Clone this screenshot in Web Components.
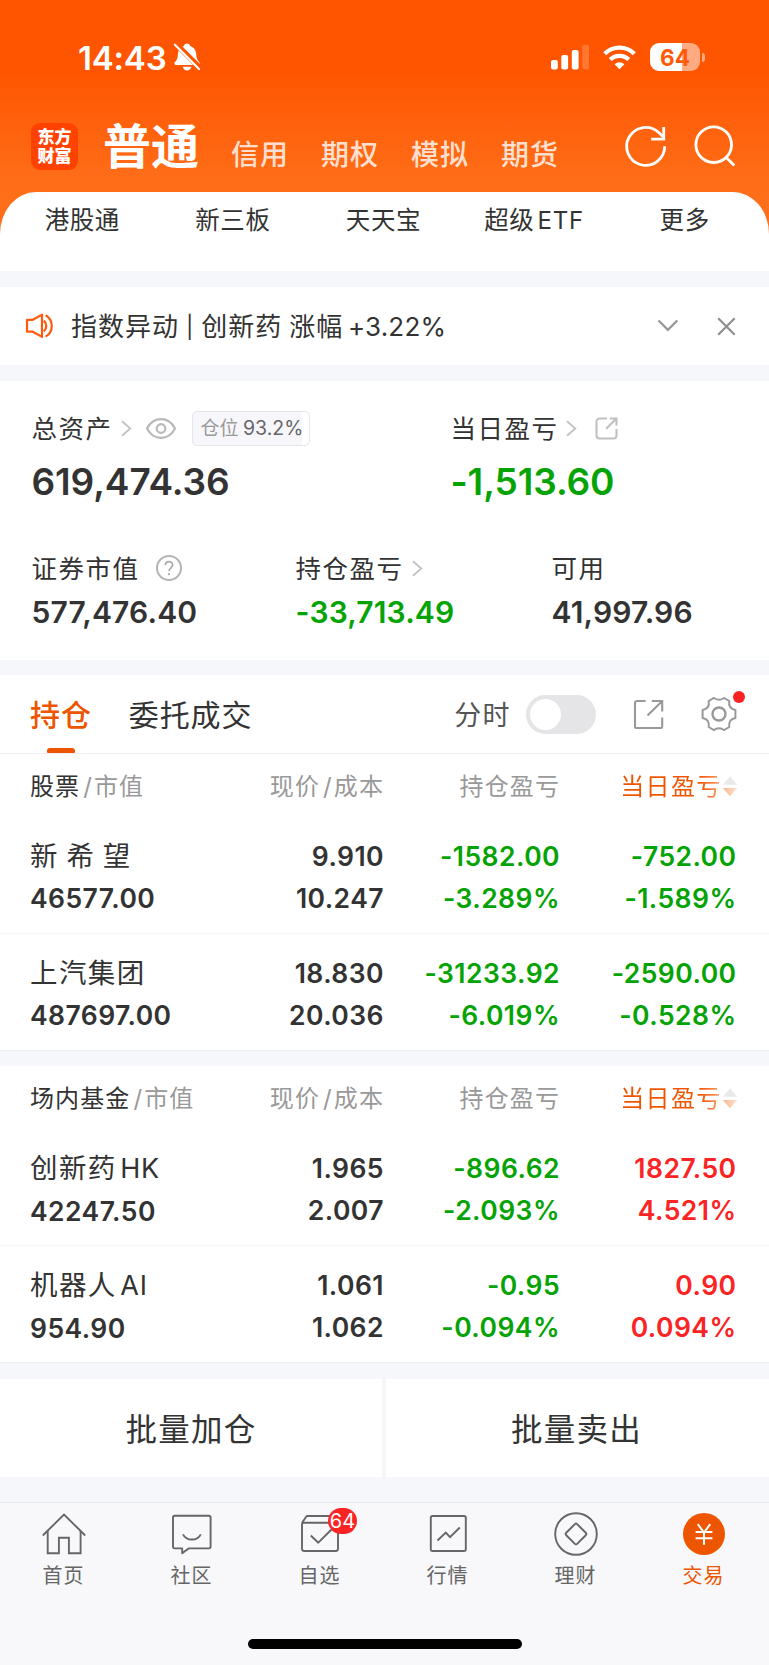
<!DOCTYPE html>
<html lang="zh-CN">
<head>
<meta charset="utf-8">
<meta name="viewport" content="width=device-width, initial-scale=1">
<title>交易</title>
<style>
  html, body { margin: 0; padding: 0; }
  body {
    width: 769px;
    height: 1665px;
    overflow: hidden;
    background: #f6f7fa;
    color: #333;
    font-family: Inter, "Noto Sans CJK SC", sans-serif;
    --brand: #ee5500;
    --up: #fb2424;
    --down: #05a305;
    --muted: #999;
  }
</style>
</head>
<body>
<trade-app></trade-app>

<script>
// ── Helpers ───────────────────────────────────────────────
const esc = s => s.replace(/&/g, '&amp;').replace(/</g, '&lt;').replace(/>/g, '&gt;');

// Latin run right after a CJK character gets a small gap
const mixed = s => esc(s).replace(/([\u4e00-\u9fff])([A-Z]+)/g, '$1<span class="lat">$2</span>');

class BaseElement extends HTMLElement {
  constructor() {
    super();
    this.attachShadow({ mode: 'open' });
  }
  connectedCallback() {
    this.shadowRoot.innerHTML = `<style>${this.styles()}</style>${this.render()}`;
  }
  styles() { return ':host { display: block; }'; }
  render() { return '<slot></slot>'; }
}

// ── <ui-icon name> ────────────────────────────────────────
// [width, height, markup]
const ICONS = {
  bell: [26, 28, `<g fill="currentColor"><path d="M13 .5c1.7 0 2.9 1 3.2 2.4c3.7 1.2 5.8 4.1 6 8.1c.2 4.3 1.3 6.2 2.9 8c.8.9.7 2.2-.1 2.900H1.600c-1.2 0-1.6-1.7-.8-2.6c2-2.1 3-4 3.1-8.5c.2-4 2.3-6.7 5.9-7.9C10.2 1.500 11.300.5 13 .5Z"/><path d="M8.800 23.800h8.600c-.5 2.300-2.100 3.800-4.300 3.800s-3.800-1.500-4.300-3.800Z"/></g><path d="M1.500.5 26 25" stroke="#ff5500" stroke-width="5.4"/><path d="M.9 1.700 25 26" stroke="currentColor" stroke-width="2.2" stroke-linecap="round"/>`],
  signal: [38, 25, `<g fill="currentColor"><rect x="0" y="15" width="6.8" height="9.5" rx="2"/><rect x="10.3" y="10" width="6.8" height="14.5" rx="2"/><rect x="20.8" y="5" width="6.8" height="19.5" rx="2"/><rect x="31.2" y="0" width="6.8" height="24.5" rx="2" opacity=".2"/></g>`],
  wifi: [33, 25, `<g fill="none" stroke="currentColor" stroke-width="4.2"><path d="M1.700 8.700a21 21 0 0 1 29.600 0"/><path d="M7.200 14.600a13.400 13.400 0 0 1 18.600 0"/></g><path d="M16.500 24.300 11.600 19.200a7 7 0 0 1 9.800 0Z" fill="currentColor"/>`],
  refresh: [42, 42, `<g fill="none" stroke="currentColor" stroke-width="2.8"><path d="M39.700 21.300A19 19 0 1 1 34 7.800l4 4"/><path d="M38.700 2v12.200H26.200"/></g>`],
  search: [42, 42, `<g fill="none" stroke="currentColor" stroke-width="2.8"><circle cx="19.700" cy="19.700" r="17.800"/><path d="m32 32.200 8.300 8.300"/></g>`],
  speaker: [28, 26, `<g fill="none" stroke="#ff5a0c" stroke-width="2.2" stroke-linejoin="round"><path d="M1 6.800h5.800L16 1.600v22.300l-9.200-5.200H1Z"/><path d="M17.800 7.600c3.300 2.700 3.300 7.800 0 10.700"/><path d="M19.600 2.300c8.200 4.600 8.200 16.500 0 21.300"/></g>`],
  down: [22, 14, `<path d="m1.500 1.500 9.400 9.300 9.400-9.300" fill="none" stroke="#999" stroke-width="2.4"/>`],
  close: [19, 19, `<path d="m1.200 1.200 16.500 16.500m0-16.500L1.200 17.700" stroke="#8f8f8f" stroke-width="2.200"/>`],
  right: [11, 17, `<path d="m1 1.200 8.300 7.300L1 15.800" fill="none" stroke="#c2c2c2" stroke-width="1.8"/>`],
  eye: [30, 21, `<g fill="none" stroke="#b9b9b9" stroke-width="2.2"><path d="M1 10.500C7.500-2 22.500-2 29 10.500C22.500 23 7.500 23 1 10.500Z"/><circle cx="15" cy="10.500" r="4.300"/></g>`],
  shareSm: [23, 23, `<g fill="none" stroke="#c0c0c0" stroke-width="2.1"><path d="M12 1.500H4.500a3 3 0 0 0-3 3v14a3 3 0 0 0 3 3h14a3 3 0 0 0 3-3v-6.500"/><path d="M14.800 1.500h6.700v7M21.200 1.800l-10 10"/></g>`],
  help: [26, 26, `<circle cx="13" cy="13" r="12" fill="none" stroke="#b4b4b4" stroke-width="2"/><path d="M9.300 10.300c0-4.900 7.300-4.800 7.300-.3c0 2.800-3.600 3-3.600 6.200" fill="none" stroke="#aaa" stroke-width="1.7"/><circle cx="13" cy="19.200" r="1.100" fill="#aaa"/>`],
  share: [31, 31, `<g fill="none" stroke="#999" stroke-width="2.1"><path d="M12.600 2H4a2 2 0 0 0-2 2v24a1 1 0 0 0 1 1h25a1.200 1.200 0 0 0 1.200-1.200V18.500"/><path d="M18.800 2h10.400v10.500M28.800 2.400 14.500 16.500"/></g>`],
  gear: [36, 36, `<g fill="none" stroke="#999" stroke-width="2"><path stroke-linejoin="round" d="M13 1.900C15.500 4.300 20.500 4.300 23 1.900L28.300 5C27.500 9.500 29.500 13 34.400 14V22C29.500 23 27.500 26.500 28.300 31L23 34.100C20.500 31.700 15.500 31.700 13 34.100L7.700 31C8.500 26.500 6.500 23 1.600 22V14C6.500 13 8.500 9.500 7.700 5Z"/><circle cx="18" cy="18" r="6.500" stroke-width="2.400"/></g>`],
  sort: [16, 21, `<path d="M8 .5 15.300 8.700H.7Z" fill="#e9e9e9"/><path d="M8 20.300 15.300 12H.7Z" fill="url(#g)"/><defs><linearGradient id="g"><stop stop-color="#f9b58c"/><stop offset="1" stop-color="#fde4d6"/></linearGradient></defs>`],
  home: [44, 44, `<g fill="none" stroke="#666" stroke-width="1.9"><path d="M.8 23.500 22 2.500l21.200 21"/><path d="M5.700 19v22.200h11.200V25.700h10v15.500h11.700V19"/></g>`],
  chat: [44, 44, `<g fill="none" stroke="#666" stroke-width="1.9" stroke-linejoin="round"><path d="M4.800 3.800h34a1.800 1.800 0 0 1 1.800 1.800v29a1.800 1.800 0 0 1-1.800 1.800H18.600L12.200 41.300V36.400H4.800A1.800 1.800 0 0 1 3 34.600v-29a1.800 1.800 0 0 1 1.800-1.800Z"/><path d="M13 22.300c3.500 7 14.300 7 17.800 0"/></g>`],
  pick: [44, 44, `<g fill="none" stroke="#666" stroke-width="1.9" stroke-linejoin="round"><path d="M4 10.800 8.700 4H38l2 6.800"/><path d="M5.800 10.800h32.400a1.800 1.800 0 0 1 1.800 1.800v24.200a2.200 2.200 0 0 1-2.200 2.200H6.200A2.200 2.200 0 0 1 4 36.800V12.600a1.800 1.800 0 0 1 1.800-1.800Z"/><path d="m12.800 23.500 7.500 7.200 13.200-13.200"/></g>`],
  chart: [44, 44, `<g fill="none" stroke="#666" stroke-width="1.9"><rect x="4.800" y="4" width="35" height="35" rx="1.8"/><path d="m11.500 28.500 8.300-8 4.200 4.700 9.800-9.700"/></g>`],
  coin: [44, 44, `<g fill="none" stroke="#666" stroke-width="1.9" stroke-linejoin="round"><circle cx="22" cy="22" r="20.800"/><path d="M20.900 12.100a1.600 1.600 0 0 1 2.200 0L32 21a1.600 1.600 0 0 1 0 2l-8.900 8.900a1.600 1.600 0 0 1-2.200 0L12 23a1.600 1.600 0 0 1 0-2Z"/></g>`],
  trade: [44, 44, `<circle cx="22" cy="22" r="21" fill="#ee5500"/><g fill="none" stroke="#fff" stroke-width="2"><path d="m15.800 12.200 6.200 8.300 6.200-8.300M22 19.500v13.300M13.600 20h16.800M13.600 26.200h16.800"/></g>`],
};

customElements.define('ui-icon', class extends BaseElement {
  styles() { return ':host { display: block; flex: none; } svg { display: block; overflow: visible; }'; }
  render() {
    const [w, h, body] = ICONS[this.getAttribute('name')];
    return `<svg width="${w}" height="${h}" viewBox="0 0 ${w} ${h}">${body}</svg>`;
  }
});

// ── <status-bar> ──────────────────────────────────────────
customElements.define('status-bar', class extends BaseElement {
  styles() {
    return `
      :host { display: flex; align-items: center; height: 30px; padding: 42px 64px 0 78px; color: #fff; }
      .time { font-size: 33px; line-height: 30px; padding-top: 1px; font-weight: 600; letter-spacing: -0.2px; margin-right: 8px; }
      .signal { margin-left: auto; margin-right: 14px; }
      .wifi { margin-right: 14px; }
      .battery {
        width: 50px; height: 28px; border-radius: 9px; box-sizing: border-box;
        background: linear-gradient(90deg, #fff 64%, #ffaa80 64%);
        color: #ff5a08; font-size: 22.5px; line-height: 29px; font-weight: 700; text-align: center;
      }
      .tip { width: 3px; height: 9px; margin-left: 2px; border-radius: 0 4px 4px 0; background: #ffaa80; }
    `;
  }
  render() {
    return `
      <span class="time">14:43</span><ui-icon name="bell"></ui-icon>
      <ui-icon class="signal" name="signal"></ui-icon>
      <ui-icon class="wifi" name="wifi"></ui-icon>
      <div class="battery">64</div><div class="tip"></div>`;
  }
});

// ── <account-nav> ─────────────────────────────────────────
customElements.define('account-nav', class extends BaseElement {
  styles() {
    return `
      :host { display: flex; align-items: center; height: 70px; padding: 39px 33.5px 0 31px; color: #fff; }
      .logo {
        width: 47px; height: 47px; border-radius: 9px; background: #ff4200; box-sizing: border-box;
        padding-top: 5px; font-size: 17px; line-height: 19px; font-weight: 900; text-align: center;
      }
      .current { margin-left: 25px; padding-top: 1px; font-size: 48px; line-height: 70px; font-weight: 700; }
      .tab { margin-left: 32px; padding-top: 17px; font-size: 28px; line-height: 40px; letter-spacing: 1px; font-weight: 500; color: #ffe0d0; }
      .refresh { margin-left: auto; }
      .search { margin-left: 27px; }
    `;
  }
  render() {
    const tabs = ['信用', '期权', '模拟', '期货'].map(t => `<span class="tab">${t}</span>`).join('');
    return `<div class="logo">东方<br>财富</div><span class="current">普通</span>${tabs}
      <ui-icon class="refresh" name="refresh"></ui-icon><ui-icon class="search" name="search"></ui-icon>`;
  }
});

// ── <quick-nav> ───────────────────────────────────────────
customElements.define('quick-nav', class extends BaseElement {
  styles() {
    return `
      :host {
        display: grid; grid-template-columns: repeat(5, 1fr); box-sizing: border-box;
        height: 79.5px; margin-top: 10.5px; padding: 8px 9px 0 7px; background: #fff; border-radius: 36px 36px 0 0 / 42px 42px 0 0;
      }
      span.item { text-align: center; font-size: 24.5px; line-height: 40px; letter-spacing: .6px; }
      .lat { margin-left: 3px; font-size: 24px; letter-spacing: .8px; }
    `;
  }
  render() {
    return ['港股通', '新三板', '天天宝', '超级ETF', '更多'].map(t => `<span class="item">${mixed(t)}</span>`).join('');
  }
});

// ── <news-bar> ────────────────────────────────────────────
customElements.define('news-bar', class extends BaseElement {
  styles() {
    return `
      :host { display: flex; align-items: center; height: 78px; margin-top: 16px; padding: 0 33px 0 26px; background: #fff; }
      .text { margin-left: 17px; padding-top: 1px; font-size: 26px; line-height: 40px; letter-spacing: 1px; word-spacing: -1.3px; white-space: pre; }
      ::slotted(b) { font-weight: 400; letter-spacing: .2px; margin-left: -2.5px; }
      ::slotted(i) { font-style: normal; font-size: 22px; vertical-align: 1px; }
      .down { margin-left: auto; }
      .close { margin-left: 38px; }
    `;
  }
  render() {
    return `<ui-icon name="speaker"></ui-icon><span class="text"><slot></slot></span>
      <ui-icon class="down" name="down"></ui-icon><ui-icon class="close" name="close"></ui-icon>`;
  }
});

// ── <asset-stat label value size tone> ────────────────────
customElements.define('asset-stat', class extends BaseElement {
  styles() {
    return `
      :host { display: block; }
      .label { display: flex; align-items: center; height: 36px; font-size: 25.5px; line-height: 37px; letter-spacing: 1.5px; }
      .value { font-size: 30px; line-height: 40px; font-weight: 600; margin-top: 6px; letter-spacing: .15px; }
      :host([size="large"]) .value { font-size: 37px; line-height: 48px; margin-top: 12px; letter-spacing: -.1px; }
      :host([tone="down"]) .value { color: var(--down); }
    `;
  }
  render() {
    return `<div class="label">${this.getAttribute('label')}<slot></slot></div>
      <div class="value">${this.getAttribute('value')}</div>`;
  }
});

// ── <asset-card> ──────────────────────────────────────────
customElements.define('asset-card', class extends BaseElement {
  styles() {
    return `
      :host { display: block; box-sizing: border-box; height: 279px; margin-top: 16px; padding: 29px 0 0 31.5px; background: #fff; }
      .top { display: grid; grid-template-columns: 419px 1fr; height: 140px; }
      .bottom { display: grid; grid-template-columns: 264px 256px 1fr; }
      .tag {
        display: flex; align-items: center; box-sizing: border-box; height: 35px; width: 118px; padding-left: 8px;
        border: 1px solid #e6e6ea; border-radius: 5px; font-size: 19px; letter-spacing: 0; color: #999;
        background: linear-gradient(90deg, #f7f7fb 109px, #fff 109px);
      }
      .tag b { margin-left: 4.5px; font-weight: 400; font-size: 19.5px; letter-spacing: 0; color: #666; }
    `;
  }
  render() {
    return `
      <div class="top">
        <asset-stat label="总资产" value="619,474.36" size="large">
          <ui-icon name="right" style="margin-left:8px"></ui-icon>
          <ui-icon name="eye" style="margin-left:14px"></ui-icon>
          <div class="tag" style="margin-left:16px">仓位<b>93.2%</b></div>
        </asset-stat>
        <asset-stat label="当日盈亏" value="-1,513.60" size="large" tone="down">
          <ui-icon name="right" style="margin-left:7px"></ui-icon>
          <ui-icon name="shareSm" style="margin-left:18px"></ui-icon>
        </asset-stat>
      </div>
      <div class="bottom">
        <asset-stat label="证券市值" value="577,476.40"><ui-icon name="help" style="margin-left:16px"></ui-icon></asset-stat>
        <asset-stat label="持仓盈亏" value="-33,713.49" tone="down"><ui-icon name="right" style="margin-left:8px"></ui-icon></asset-stat>
        <asset-stat label="可用" value="41,997.96"></asset-stat>
      </div>`;
  }
});

// ── <position-tabs> ───────────────────────────────────────
customElements.define('position-tabs', class extends BaseElement {
  styles() {
    return `
      :host {
        display: flex; align-items: center; box-sizing: border-box; height: 79px; margin-top: 15px;
        padding: 0 32px 0 30px; background: #fff; border-bottom: 1px solid #efeff1;
      }
      .tab { position: relative; height: 78px; font-size: 30px; line-height: 80px; letter-spacing: .9px; }
      .tab + .tab { margin-left: 37px; }
      .active { color: var(--brand); font-weight: 500; }
      .active::after {
        content: ""; position: absolute; left: 17px; bottom: 0; width: 28px; height: 5px;
        border-radius: 3px 3px 1px 1px; background: var(--brand);
      }
      .label { margin-left: auto; padding-top: 3px; font-size: 27px; line-height: 40px; letter-spacing: 1.4px; color: #555; }
      .switch { width: 70px; height: 39px; margin-left: 15px; border-radius: 20px; background: #e5e5e7; box-sizing: border-box; padding: 4px; }
      .knob { width: 31px; height: 31px; border-radius: 50%; background: #fff; }
      .share { margin-left: 37px; }
      .gear { position: relative; margin-left: 37px; }
      .dot { position: absolute; right: -8px; top: -5px; width: 12px; height: 12px; border-radius: 50%; background: #fb2424; }
    `;
  }
  render() {
    return `
      <span class="tab active">持仓</span><span class="tab">委托成交</span>
      <span class="label">分时</span><div class="switch"><div class="knob"></div></div>
      <ui-icon class="share" name="share"></ui-icon>
      <div class="gear"><ui-icon name="gear"></ui-icon><span class="dot"></span></div>`;
  }
});

// ── <holdings-table kind rows> ────────────────────────────
customElements.define('holdings-table', class extends BaseElement {
  styles() {
    return `
      :host { display: block; background: #fff; }
      .row, .head { display: grid; grid-template-columns: 183px 171px 176px 176.5px; padding-left: 30px; box-sizing: border-box; text-align: right; }
      .head { height: 63px; font-size: 24px; line-height: 65px; letter-spacing: 1.1px; color: var(--muted); }
      .head i { font-style: normal; margin: 0 1px 0 3px; }
      .row > :first-child, .head > :first-child { text-align: left; white-space: nowrap; }
      .kind { color: #333; }
      .sorted { display: flex; align-items: center; justify-content: flex-end; height: 64px; color: var(--brand); margin-right: -1px; }
      .sorted span { letter-spacing: 1.3px; background: linear-gradient(90deg, #ee5500 78%, #f8a677); -webkit-background-clip: text; color: transparent; }
      .row { height: 117px; padding-top: 18px; border-bottom: 1px solid #f6f6f8; font-size: 26.5px; line-height: 42px; font-weight: 600; letter-spacing: .45px; }
      .row.last { border-bottom-color: #eeeff2; }
      .name { display: block; font-size: 27.5px; font-weight: 400; letter-spacing: 1.4px; word-spacing: -1.6px; white-space: pre; }
      .name .lat { margin-left: 3.5px; font-size: 27px; letter-spacing: .8px; }
      .up { color: var(--up); }
      .down { color: var(--down); }
    `;
  }
  render() {
    const rows = JSON.parse(this.getAttribute('rows'));
    const tone = v => v.startsWith('-') ? 'down' : 'up';
    return `
      <div class="head">
        <div><span class="kind">${this.getAttribute('kind')}</span><i>/</i>市值</div>
        <div>现价<i>/</i>成本</div><div>持仓盈亏</div>
        <div class="sorted"><span>当日盈亏</span><ui-icon name="sort"></ui-icon></div>
      </div>
      ${rows.map(([name, worth, price, cost, pl, plPct, day, dayPct], i) => `
      <div class="row${i === rows.length - 1 ? ' last' : ''}">
        <div><span class="name">${mixed(name)}</span>${worth}</div>
        <div>${price}<br>${cost}</div>
        <div class="${tone(pl)}">${pl}<br>${plPct}</div>
        <div class="${tone(day)}">${day}<br>${dayPct}</div>
      </div>`).join('')}`;
  }
});

// ── <batch-actions> ───────────────────────────────────────
customElements.define('batch-actions', class extends BaseElement {
  styles() {
    return `
      :host { display: grid; grid-template-columns: 382px 383px; gap: 4px; height: 98px; margin-top: 16px; }
      div { height: 98px; background: #fff; text-align: center; font-size: 31.5px; line-height: 101px; letter-spacing: 1.2px; }
      div + div { padding-right: 2px; box-sizing: border-box; }
    `;
  }
  render() { return '<div>批量加仓</div><div>批量卖出</div>'; }
});

// ── <tab-bar> ─────────────────────────────────────────────
customElements.define('tab-bar', class extends BaseElement {
  styles() {
    return `
      :host { display: block; height: 162px; margin-top: 25px; background: #f8f8fb; border-top: 1.5px solid #e8e8ea; }
      nav { display: grid; grid-template-columns: repeat(6, 1fr); width: 768px; height: 136px; }
      .item { display: flex; flex-direction: column; align-items: center; padding-top: 9px; position: relative; }
      .label { margin: 4px 0 0 -1px; font-size: 20px; line-height: 32px; letter-spacing: 1px; color: #666; }
      .item.active .label { color: var(--brand); }
      .badge {
        position: absolute; left: 72px; top: 4.5px; width: 29px; height: 26px; border-radius: 13px;
        background: #fb2424; color: #fff; font-size: 20px; line-height: 26px; text-align: center;
      }
      .indicator { width: 274px; height: 10px; margin: 0 auto; border-radius: 5px; background: #000; }
    `;
  }
  render() {
    const items = [['home', '首页'], ['chat', '社区'], ['pick', '自选', 64], ['chart', '行情'], ['coin', '理财'], ['trade', '交易']];
    return `<nav>${items.map(([icon, label, badge]) => `
      <div class="item${icon === 'trade' ? ' active' : ''}">
        <ui-icon name="${icon}"></ui-icon><span class="label">${label}</span>
        ${badge ? `<span class="badge">${badge}</span>` : ''}
      </div>`).join('')}</nav><div class="indicator"></div>`;
  }
});

// ── <trade-app> ───────────────────────────────────────────
const STOCKS = [
  ['新 希 望', '46577.00', '9.910', '10.247', '-1582.00', '-3.289%', '-752.00', '-1.589%'],
  ['上汽集团', '487697.00', '18.830', '20.036', '-31233.92', '-6.019%', '-2590.00', '-0.528%'],
];
const FUNDS = [
  ['创新药HK', '42247.50', '1.965', '2.007', '-896.62', '-2.093%', '1827.50', '4.521%'],
  ['机器人AI', '954.90', '1.061', '1.062', '-0.95', '-0.094%', '0.90', '0.094%'],
];

customElements.define('trade-app', class extends BaseElement {
  styles() {
    return `
      :host { display: block; }
      header { background: linear-gradient(180deg, #ff5500 0, #ff5500 70px, #ff6d18 180px, #ff6f1c 235px); }
      .funds { margin-top: 15px; }
    `;
  }
  render() {
    return `
      <header>
        <status-bar></status-bar>
        <account-nav></account-nav>
        <quick-nav></quick-nav>
      </header>
      <news-bar>指数异动 <i>|</i> 创新药 涨幅 <b>+3.22%</b></news-bar>
      <asset-card></asset-card>
      <position-tabs></position-tabs>
      <holdings-table kind="股票" rows='${JSON.stringify(STOCKS)}'></holdings-table>
      <holdings-table class="funds" kind="场内基金" rows='${JSON.stringify(FUNDS)}'></holdings-table>
      <batch-actions></batch-actions>
      <tab-bar></tab-bar>`;
  }
});
</script>
</body>
</html>
